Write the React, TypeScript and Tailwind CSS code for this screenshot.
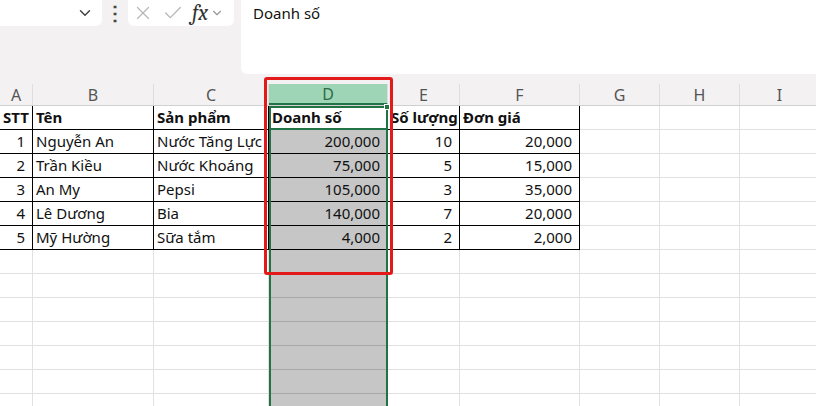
import { ChevronDown, X, Check } from 'lucide-react';

const cols = [
  { k: 'A', w: 33 },
  { k: 'B', w: 121 },
  { k: 'C', w: 115 },
  { k: 'D', w: 119 },
  { k: 'E', w: 72 },
  { k: 'F', w: 120 },
  { k: 'G', w: 80 },
  { k: 'H', w: 80 },
  { k: 'I', w: 80 },
];

type Cell = { t: string; right?: boolean; bold?: boolean };

const data: Cell[][] = [
  [{ t: 'STT', bold: true }, { t: 'Tên', bold: true }, { t: 'Sản phẩm', bold: true }, { t: 'Doanh số', bold: true }, { t: 'Số lượng', bold: true }, { t: 'Đơn giá', bold: true }],
  [{ t: '1', right: true }, { t: 'Nguyễn An' }, { t: 'Nước Tăng Lực' }, { t: '200,000', right: true }, { t: '10', right: true }, { t: '20,000', right: true }],
  [{ t: '2', right: true }, { t: 'Trần Kiều' }, { t: 'Nước Khoáng' }, { t: '75,000', right: true }, { t: '5', right: true }, { t: '15,000', right: true }],
  [{ t: '3', right: true }, { t: 'An My' }, { t: 'Pepsi' }, { t: '105,000', right: true }, { t: '3', right: true }, { t: '35,000', right: true }],
  [{ t: '4', right: true }, { t: 'Lê Dương' }, { t: 'Bia' }, { t: '140,000', right: true }, { t: '7', right: true }, { t: '20,000', right: true }],
  [{ t: '5', right: true }, { t: 'Mỹ Hường' }, { t: 'Sữa tắm' }, { t: '4,000', right: true }, { t: '2', right: true }, { t: '2,000', right: true }],
];

const font = { fontFamily: '"Noto Sans", "Liberation Sans", sans-serif' };

export default function App() {
  const rows = Array.from({ length: 13 }, (_, r) => r);
  return (
    <div className="relative w-[816px] h-[406px] overflow-hidden bg-white text-[#111]" style={font}>
      {/* formula bar area */}
      <div className="flex h-[84px] bg-[#f3f1f1]">
        <div className="w-[102px] h-[26px] bg-white rounded-br-md flex items-center justify-end pr-2">
          <ChevronDown size={18} className="text-[#444]" />
        </div>
        <div className="w-[26px] h-[26px] flex items-center justify-center text-[#444] text-xl font-bold">⋮</div>
        <div className="w-[106px] h-[26px] bg-white rounded-b-md flex items-center gap-[8px] pl-[4px] text-[#b5b5b5]">
          <X size={22} strokeWidth={1.3} />
          <Check size={22} strokeWidth={1.3} />
          <span className="flex items-center text-[#333] italic text-[22px] leading-none font-serif">fx<ChevronDown size={14} className="text-[#999] ml-0.5" /></span>
        </div>
        <div className="ml-[7px] flex-1 h-[74px] bg-white rounded-bl-md pl-3 pt-[2px] text-[15px]">Doanh số</div>
      </div>
      {/* column headers */}
      <div className="flex h-[22px] bg-[#f3f1f1] border-b border-[#d0d0d0]">
        {cols.map((c) => (
          <div
            key={c.k}
            style={{ width: c.w }}
            className={`shrink-0 flex items-center justify-center text-[16px] border-r border-[#dedede] ${c.k === 'D' ? 'bg-[#9fd5b7] text-[#2b6b46] border-b-2 border-b-[#217346]' : 'text-[#555]'}`}
          >
            {c.k}
          </div>
        ))}
      </div>
      {/* grid */}
      {rows.map((r) => (
        <div key={r} className="flex h-[24px]">
          {cols.map((c, ci) => {
            const cell = data[r]?.[ci];
            const inTable = r < 6 && ci < 6;
            const isD = c.k === 'D';
            const border = inTable ? 'border-b border-r border-black' : isD ? 'border-b border-r border-[#a9a9a9]' : 'border-b border-r border-[#e1e1e1]';
            return (
              <div
                key={c.k}
                style={{ width: c.w }}
                className={`shrink-0 flex items-center text-[15px] whitespace-nowrap px-[3px] ${border} ${isD && r > 0 ? 'bg-[#c6c6c6] relative' : ''} ${cell?.right ? 'justify-end pr-[7px]' : ''} ${cell?.bold ? 'font-bold' : ''}`}
              >
                {cell?.t}
              </div>
            );
          })}
        </div>
      ))}
      {/* selection overlay */}
      <div className="absolute left-[269px] top-[106px] w-[119px] h-[300px] border-x-2 border-[#217346] pointer-events-none" />
      <div className="absolute left-[269px] top-[106px] w-[119px] h-[24px] border-2 border-[#217346] pointer-events-none" />
      <div className="absolute left-[384px] top-[104px] w-[6px] h-[6px] bg-[#217346] border border-white" />
      {/* red highlight */}
      <div className="absolute left-[264px] top-[77px] w-[129px] h-[198px] border-[3px] border-[#e41a1a] rounded-[3px] pointer-events-none" />
    </div>
  );
}
